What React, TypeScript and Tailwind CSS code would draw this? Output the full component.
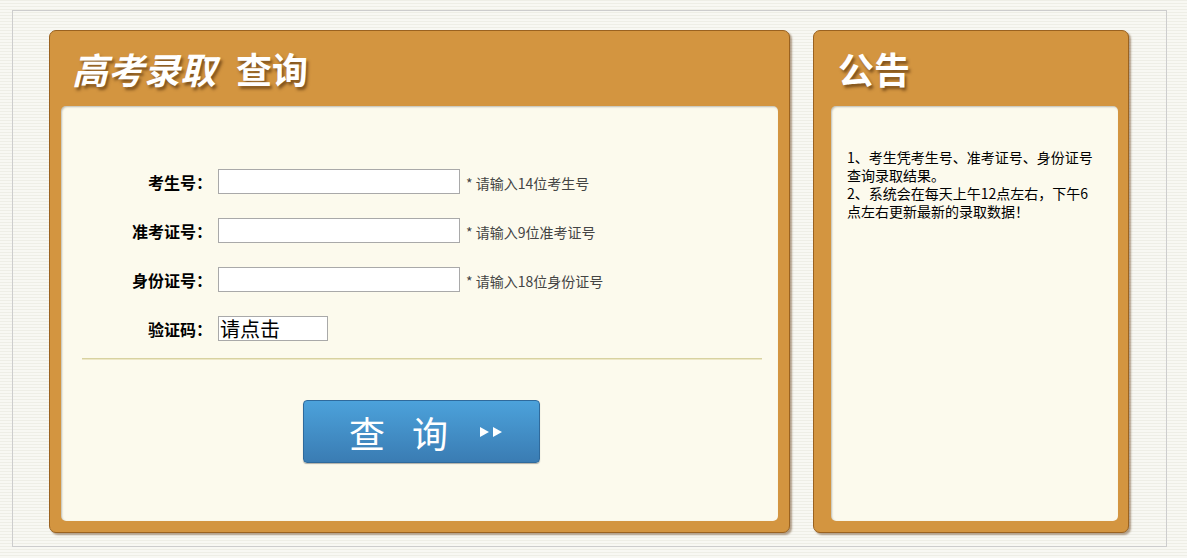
import React from 'react';

const font = { fontFamily: '"Noto Sans CJK SC", "Noto Sans", sans-serif' };

function FormRow({ label, hint }: { label: string; hint: string }) {
  return (
    <div className="flex h-[25px] items-center">
      <label className="w-[151px] text-right text-[16px] font-bold text-black">{label}</label>
      <input
        type="text"
        className="ml-[6px] h-[25px] w-[242px] border border-[#a9a9a9] bg-white outline-none"
      />
      <span className="ml-[6px] mt-[3px] text-[14px] text-[#444]">{hint}</span>
    </div>
  );
}

export default function App() {
  return (
    <div
      className="h-[558px] w-[1187px] overflow-hidden bg-[repeating-linear-gradient(0deg,#f8f8f3_0px,#f8f8f3_2px,#eeeee6_2px,#eeeee6_3px)] pt-[10px] pl-[12px]"
      style={font}
    >
      <div className="flex h-[537px] w-[1155px] gap-[23px] border border-[#cdcdcd] pt-[19px] pl-[36px]">
        {/* 左侧查询 */}
        <div className="flex h-[503px] w-[741px] flex-col rounded-[7px] border border-[#9a6220] bg-[#d39540] shadow-[2px_2px_2px_rgba(90,50,10,0.45)]">
          <div className="h-[75px] pl-[22px] pt-[17px]">
            <h1 className="text-[36px] leading-[40px] font-bold text-white [text-shadow:2px_3px_3px_rgba(60,30,0,0.55)]">
              <span className="italic">高考录取</span>
              <span className="ml-[20px]">查询</span>
            </h1>
          </div>
          <div className="ml-[11px] mr-[11px] h-[415px] rounded-[5px] bg-[#fcfaed] shadow-[inset_1px_1px_2px_rgba(0,0,0,0.25)]">
            <div className="flex flex-col gap-[24px] pt-[63px]">
              <FormRow label="考生号：" hint="* 请输入14位考生号" />
              <FormRow label="准考证号：" hint="* 请输入9位准考证号" />
              <FormRow label="身份证号：" hint="* 请输入18位身份证号" />
              <div className="flex h-[25px] items-center">
                <label className="w-[151px] text-right text-[16px] font-bold text-black">验证码：</label>
                <div className="ml-[6px] h-[25px] w-[110px] border border-[#a9a9a9] bg-white pl-[1px] text-[20px] leading-[23px] text-black">
                  请点击
                </div>
              </div>
            </div>
            <div className="mt-[17px] ml-[21px] mr-[16px] h-[2px] border-t border-[#d8d2a0] bg-[#ede7c6]" />
            <div className="mt-[40px] pl-[242px]">
              <button className="flex h-[63px] w-[237px] items-center rounded-[4px] border border-[#2f6a9c] bg-gradient-to-b from-[#4ca2db] to-[#3a7cb3] text-white shadow-[0_1px_1px_rgba(0,0,0,0.3)]">
                <span className="ml-[45px] text-[36px] leading-[40px]">查</span>
                <span className="ml-[27px] text-[36px] leading-[40px]">询</span>
                <svg className="ml-[31px]" width="24" height="16" viewBox="0 0 24 16">
                  <polygon points="1,3 10,8 1,13" fill="white" />
                  <polygon points="14,3 23,8 14,13" fill="white" />
                </svg>
              </button>
            </div>
          </div>
        </div>

        {/* 右侧公告 */}
        <div className="flex h-[503px] w-[316px] flex-col rounded-[7px] border border-[#9a6220] bg-[#d39540] shadow-[2px_2px_2px_rgba(90,50,10,0.45)]">
          <div className="h-[75px] pl-[24px] pt-[17px]">
            <h2 className="text-[36px] leading-[40px] font-bold text-white [text-shadow:2px_3px_3px_rgba(60,30,0,0.55)]">公告</h2>
          </div>
          <div className="ml-[17px] mr-[10px] h-[415px] rounded-[5px] bg-[#fcfaed] pl-[16px] pt-[42px] shadow-[inset_1px_1px_2px_rgba(0,0,0,0.25)]">
            <p className="w-[254px] text-[14px] leading-[18px] text-black">
              1、考生凭考生号、准考证号、身份证号查询录取结果。
              <br />
              2、系统会在每天上午12点左右，下午6点左右更新最新的录取数据！
            </p>
          </div>
        </div>
      </div>
    </div>
  );
}
